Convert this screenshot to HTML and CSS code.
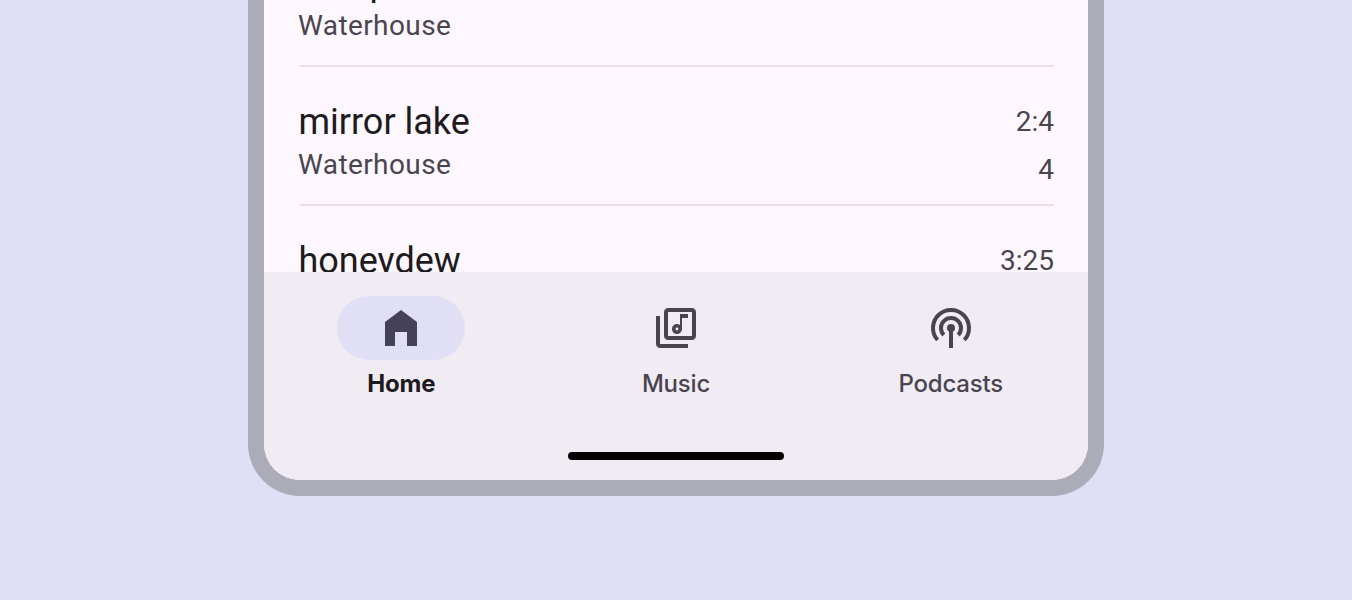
FILE: index.html
```html
<!DOCTYPE html>
<html lang="en">
<head>
  <meta charset="UTF-8" />
  <meta name="viewport" content="width=device-width, initial-scale=1.0" />
  <title>Music player</title>
  <link rel="stylesheet" href="styles.css">
</head>
<body>
  <div class="phone">
    <ul class="tracks">
      <li class="track">
        <div class="info">
          <div class="title">stoop</div>
          <div class="artist">Waterhouse</div>
        </div>
      </li>
      <li class="track">
        <div class="info">
          <div class="title">mirror lake</div>
          <div class="artist">Waterhouse</div>
        </div>
        <div class="time">2:4<br>4</div>
      </li>
      <li class="track">
        <div class="info">
          <div class="title">honeydew</div>
        </div>
        <div class="time">3:25</div>
      </li>
    </ul>
    <nav class="nav">
      <div class="tabs">
        <a class="tab active">
          <span class="pill">
            <svg class="icon" viewBox="0 0 24 24" fill="currentColor"><path d="M4 21V9l8-6 8 6v12h-5v-7H9v7z"/></svg>
          </span>
          <span class="label">Home</span>
        </a>
        <a class="tab">
          <span class="pill">
            <svg class="icon" viewBox="0 0 24 24" fill="currentColor"><path d="M20 2H8c-1.1 0-2 .9-2 2v12c0 1.1.9 2 2 2h12c1.1 0 2-.9 2-2V4c0-1.1-.9-2-2-2zm0 14H8V4h12v12zm-7.500-1c1.380 0 2.500-1.120 2.500-2.500V7h3V5h-4v5.510c-.42-.32-.93-.51-1.500-.51-1.380 0-2.500 1.120-2.500 2.500s1.120 2.500 2.500 2.500zM4 6H2v14c0 1.100.9 2 2 2h14v-2H4V6z"/><circle class="hole" cx="12.500" cy="12.500" r=".7"/></svg>
          </span>
          <span class="label">Music</span>
        </a>
        <a class="tab">
          <span class="pill">
            <svg class="icon" viewBox="0 0 24 24" fill="none" stroke="currentColor" stroke-width="2">
              <path d="M5.300 18a9 9 0 1 1 13.400 0M8.400 15.500a5 5 0 1 1 7.200 0M12 12v10"/>
              <circle cx="12" cy="12" r="2" fill="currentColor" stroke="none"/>
            </svg>
          </span>
          <span class="label">Podcasts</span>
        </a>
      </div>
      <div class="handle"></div>
    </nav>
  </div>
</body>
</html>
```

FILE: styles.css
```css
* {
  box-sizing: border-box;
}
body {
  margin: 0;
  height: 600px;
  overflow: hidden;
  background: #e1dff5;
  font-family: Roboto, sans-serif;
}
.phone {
  width: 856px;
  height: 496px;
  margin: 0 auto;
  border: 16px solid #acabb8;
  border-top: 0;
  border-radius: 0 0 52px 52px;
  background: #fef7ff;
  overflow: hidden;
}
.tracks {
  display: flex;
  flex-direction: column;
  justify-content: flex-end;
  height: 272px;
  margin: 0;
  padding: 0 34px 0 36px;
  list-style: none;
  overflow: hidden;
}
.track {
  display: flex;
  flex: none;
  justify-content: space-between;
  height: 139px;
  padding-top: 31px;
  border-bottom: 2px solid #e7e0e8;
}
.track:last-child {
  height: 66px;
  border-bottom: 0;
}
.title {
  margin-left: -1.500px;
  color: #1d1b20;
  font-size: 36px;
  line-height: 48px;
}
.artist {
  margin-left: -2px;
  color: #49454f;
  font-size: 28px;
  line-height: 38px;
  letter-spacing: 0.400px;
}
.time {
  color: #49454f;
  font-size: 28px;
  line-height: 48px;
  text-align: right;
}
.nav {
  height: 208px;
  padding-top: 24px;
  background: #f1ecf4;
}
.tabs {
  display: flex;
  height: 156px;
}
.tab {
  display: flex;
  flex: 1;
  flex-direction: column;
  align-items: center;
  color: #49454f;
}
.pill {
  display: flex;
  justify-content: center;
  align-items: center;
  width: 128px;
  height: 64px;
  border-radius: 32px;
}
.icon {
  width: 48px;
  height: 48px;
}
.hole {
  fill: #f1ecf4;
}
.label {
  margin-top: 8px;
  font-family: Inter, sans-serif;
  font-size: 24px;
  font-weight: 500;
  line-height: 32px;
  letter-spacing: -0.200px;
}
.active .pill {
  background: #e1dff5;
  color: #454158;
}
.active .label {
  color: #1d1b20;
  font-weight: 650;
}
.handle {
  width: 216px;
  height: 8px;
  margin: 0 auto;
  border-radius: 4px;
  background: #000;
}
```
